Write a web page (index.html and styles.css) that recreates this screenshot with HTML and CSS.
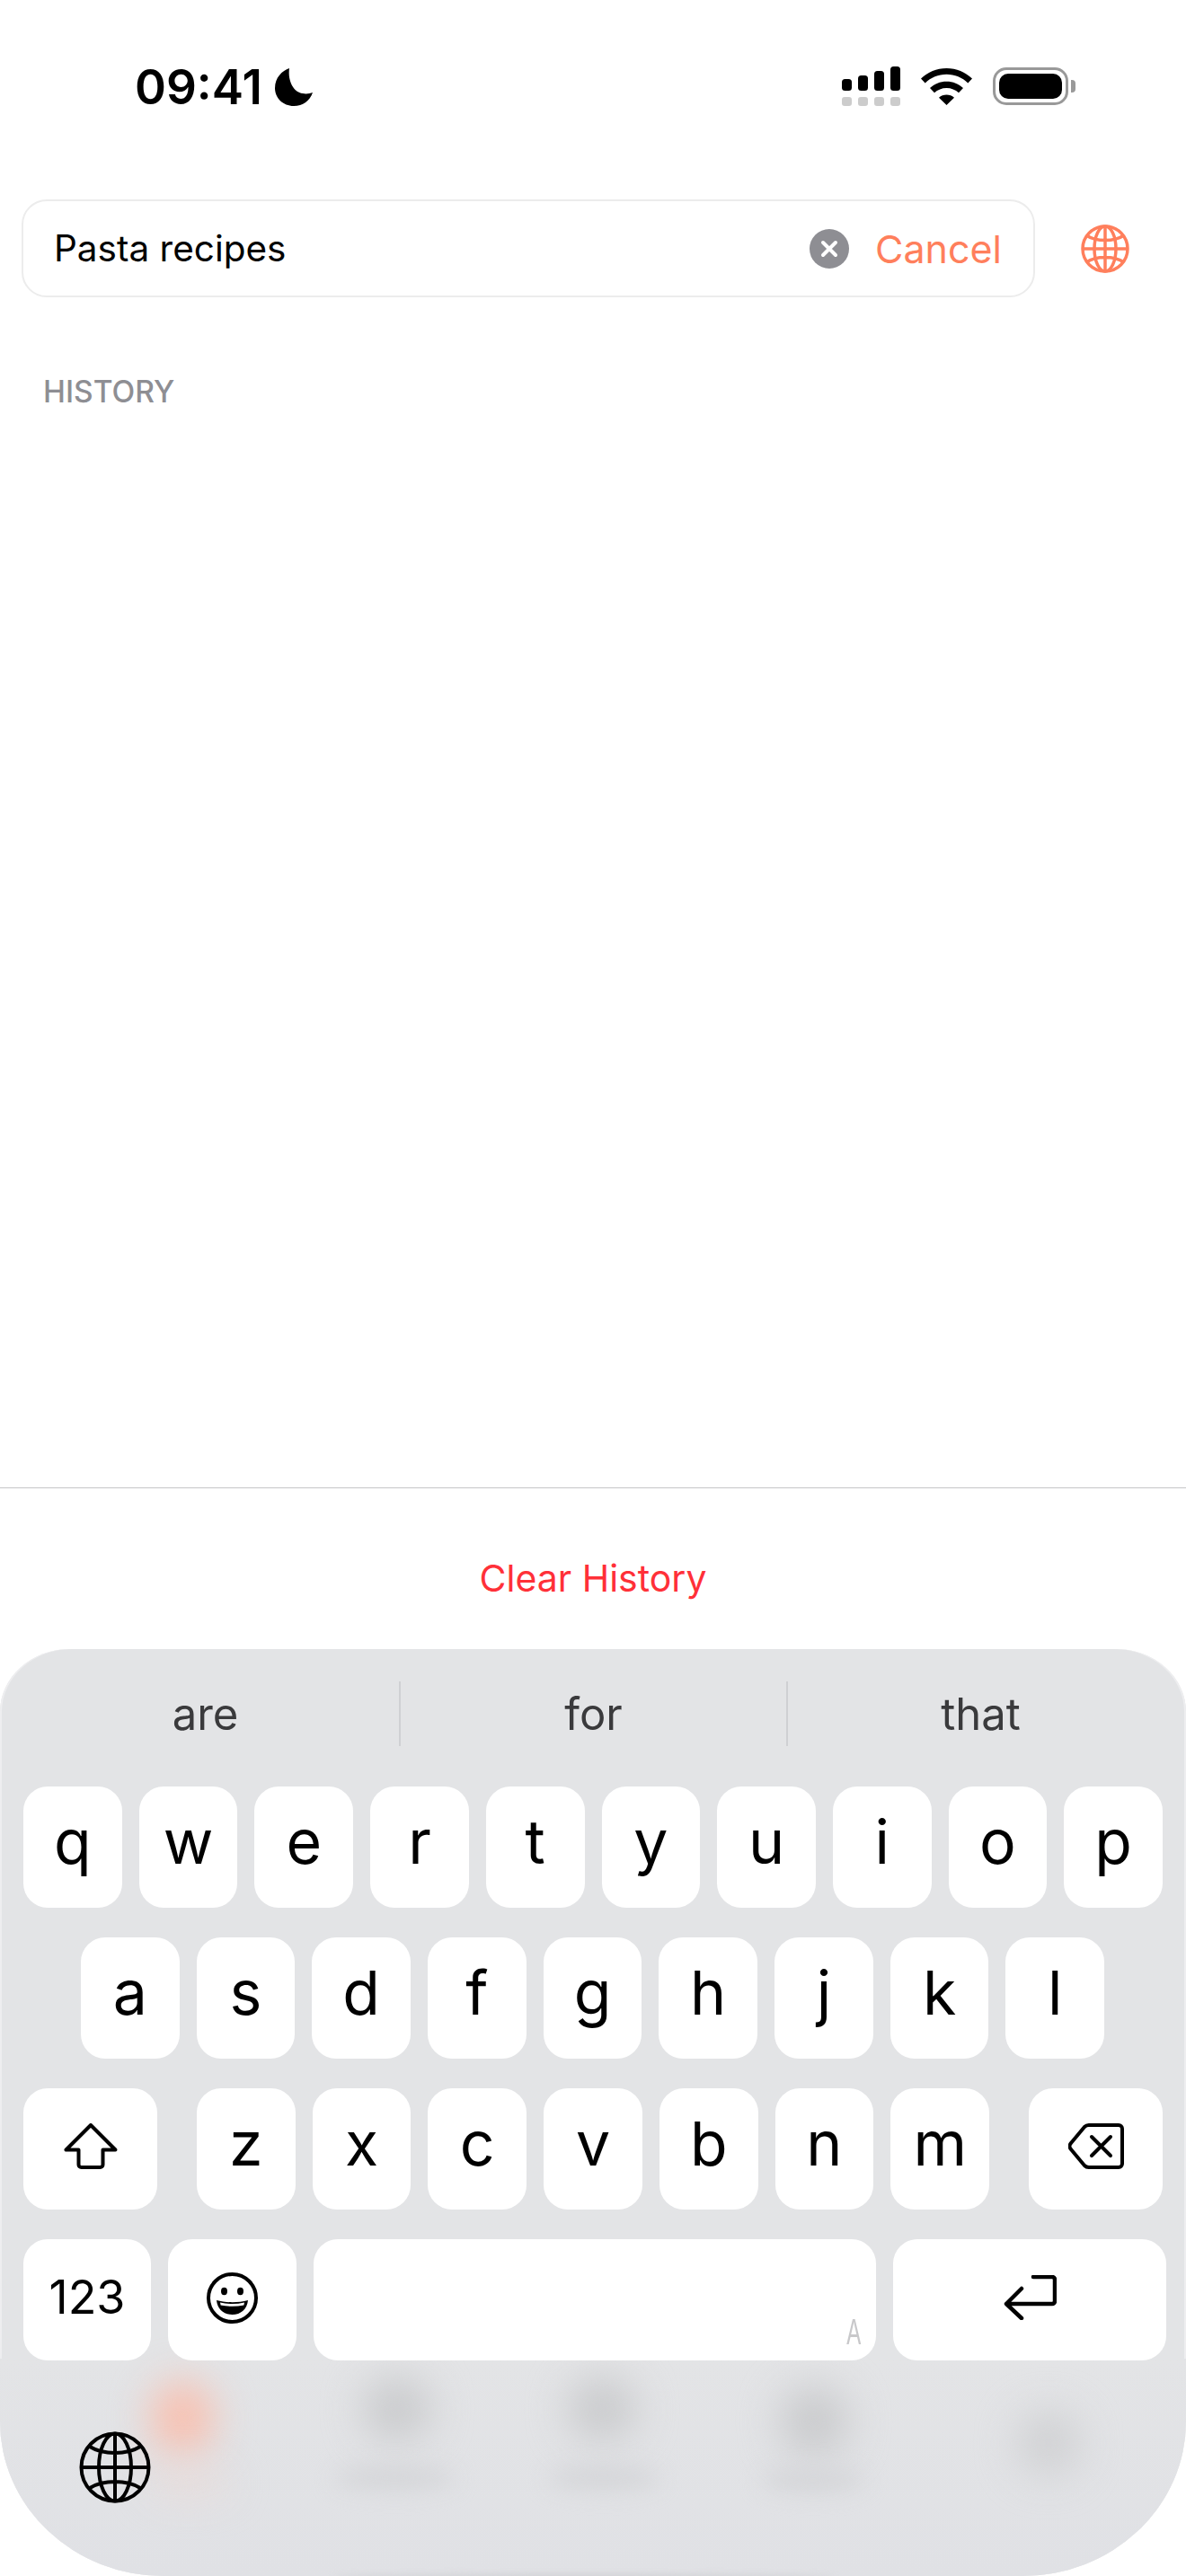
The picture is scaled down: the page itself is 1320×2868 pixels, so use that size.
FILE: index.html
```html
<!DOCTYPE html>
<html lang="en">
<head>
  <meta charset="UTF-8">
  <meta name="viewport" content="width=device-width, initial-scale=1.0">
  <title>Search</title>
  <link rel="stylesheet" href="styles.css">
</head>
<body>
  <div class="status-bar">
    <div class="status-time">
      <span>09:41</span>
      <svg class="moon-icon" viewBox="0 0 42 42"><path d="M16 0C8 3 0 10 0 22c0 11 9 20 21 20 10 0 18-6 21-15-3 1-7 2-11 1C21 27 14 14 16 0z" fill="#000"/></svg>
    </div>
    <div class="status-icons">
      <svg class="signal-icon" viewBox="0 0 65 44">
        <rect x="0" y="14" width="11" height="13" rx="3.5" fill="#000"/>
        <rect x="18" y="10" width="11" height="17" rx="3.5" fill="#000"/>
        <rect x="36" y="5" width="11" height="22" rx="3.5" fill="#000"/>
        <rect x="54" y="0" width="11" height="27" rx="3.5" fill="#000"/>
        <rect x="0" y="34" width="11" height="10" rx="3" fill="#ccc"/>
        <rect x="18" y="34" width="11" height="10" rx="3" fill="#ccc"/>
        <rect x="36" y="34" width="11" height="10" rx="3" fill="#ccc"/>
        <rect x="54" y="34" width="11" height="10" rx="3" fill="#ccc"/>
      </svg>
      <svg class="wifi-icon" viewBox="0 0 57 41"><path d="M28.500 0C17.500 0 7.500 4.300 0 11.500l4.700 5C11 10.300 19.300 6.800 28.500 6.800s17.500 3.500 23.800 9.700l4.700-5C49.500 4.300 39.500 0 28.500 0zM10 22l5 5.300c3.600-3.400 8.300-5.400 13.500-5.400s9.900 2 13.500 5.400L47 22c-4.900-4.600-11.300-7.300-18.500-7.300S14.900 17.400 10 22zm10 10.700L28.500 41l8.500-8.300c-2.300-2-5.200-3.200-8.500-3.200s-6.200 1.200-8.500 3.200z" fill="#000"/></svg>
      <div class="battery">
        <div class="battery-shell"><div class="battery-level"></div></div>
        <div class="battery-cap"></div>
      </div>
    </div>
  </div>

  <div class="search-row">
    <div class="search-box">
      <span class="search-text">Pasta recipes</span>
      <svg class="clear-icon" viewBox="0 0 44 44">
        <circle cx="22" cy="22" r="22" fill="#8e8e93"/>
        <path d="M15 15l14 14M29 15L15 29" stroke="#fff" stroke-width="4" stroke-linecap="round"/>
      </svg>
      <span class="cancel">Cancel</span>
    </div>
    <svg class="globe-icon globe-orange" viewBox="0 0 54 54">
      <circle cx="27" cy="27" r="25"/>
      <ellipse cx="27" cy="27" rx="12" ry="25"/>
      <path d="M27 2v50M2 27h50M6 12c6 4 13 5.500 21 5.500S42 16 48 12M6 42c6-4 13-5.500 21-5.500S42 38 48 42"/>
    </svg>
  </div>

  <div class="history">
    <div class="history-title">HISTORY</div>
  </div>

  <div class="history-footer">
    <span class="clear-history">Clear History</span>
  </div>

  <div class="keyboard">
    <div class="tab-blur">
      <div class="blob blob-orange blob-icon-1"></div>
      <div class="blob blob-orange-faint blob-label-1"></div>
      <div class="blob blob-icon-2"></div>
      <div class="blob blob-label blob-label-2"></div>
      <div class="blob blob-icon-3"></div>
      <div class="blob blob-label blob-label-3"></div>
      <div class="blob blob-icon-4"></div>
      <div class="blob blob-label blob-label-4"></div>
      <div class="blob blob-icon-5"></div>
      <div class="blob blob-home"></div>
    </div>

    <div class="suggestions">
      <div class="suggestion">are</div>
      <div class="suggestion">for</div>
      <div class="suggestion">that</div>
    </div>

    <div class="key-rows">
      <div class="key-row">
        <div class="key">q</div><div class="key">w</div><div class="key">e</div><div class="key">r</div><div class="key">t</div>
        <div class="key">y</div><div class="key">u</div><div class="key">i</div><div class="key">o</div><div class="key">p</div>
      </div>
      <div class="key-row row-middle">
        <div class="key">a</div><div class="key">s</div><div class="key">d</div><div class="key">f</div><div class="key">g</div>
        <div class="key">h</div><div class="key">j</div><div class="key">k</div><div class="key">l</div>
      </div>
      <div class="key-row row-shift">
        <div class="key key-shift">
          <svg class="shift-icon" viewBox="0 0 60 51"><path d="M30 2L2.500 29.500H16.500V46a3 3 0 0 0 3 3h21a3 3 0 0 0 3-3V29.500H57.500z" fill="none" stroke="#000" stroke-width="4" stroke-linejoin="round"/></svg>
        </div>
        <div class="key">z</div><div class="key">x</div><div class="key">c</div><div class="key">v</div>
        <div class="key">b</div><div class="key">n</div><div class="key">m</div>
        <div class="key key-delete">
          <svg class="delete-icon" viewBox="0 0 62 51"><path d="M23 2h33a4 4 0 0 1 4 4v39a4 4 0 0 1-4 4H23a7 7 0 0 1-5-2L3 29a5 5 0 0 1 0-7L18 4a7 7 0 0 1 5-2z" fill="none" stroke="#000" stroke-width="4" stroke-linejoin="round"/><path d="M26 15l21 21M47 15L26 36" stroke="#000" stroke-width="4" stroke-linecap="round"/></svg>
        </div>
      </div>
      <div class="key-row row-bottom">
        <div class="key key-123">123</div>
        <div class="key key-emoji">
          <svg class="emoji-icon" viewBox="0 0 57 57">
            <circle cx="28.500" cy="28.500" r="26.500" fill="none" stroke="#000" stroke-width="4"/>
            <ellipse cx="19.500" cy="21" rx="3.500" ry="4.200" fill="#000"/>
            <ellipse cx="37.500" cy="21" rx="3.500" ry="4.200" fill="#000"/>
            <path d="M11 31c11 3 24 3 35 0-1 10-8 16-17.500 16S12 41 11 31z" fill="#000"/>
            <path d="M15 33.500c9 2 18 2 27 0l-.6 3c-8.500 1.800-17.300 1.800-25.800 0z" fill="#fff"/>
          </svg>
        </div>
        <div class="key key-space"><span class="space-mark">A</span></div>
        <div class="key key-return">
          <svg class="return-icon" viewBox="0 0 59 50"><path d="M33 2h21a3 3 0 0 1 3 3v24a3 3 0 0 1-3 3H3M20 15L3 32l17 16" fill="none" stroke="#000" stroke-width="4.500" stroke-linecap="round" stroke-linejoin="round"/></svg>
        </div>
      </div>
    </div>

    <svg class="globe-icon globe-black" viewBox="0 0 80 80">
      <circle cx="40" cy="40" r="37.500"/>
      <ellipse cx="40" cy="40" rx="18" ry="37.500"/>
      <path d="M40 2.500v75M2.500 40h75M12 17c8 5 17 7 28 7s20-2 28-7M12 63c8-5 17-7 28-7s20 2 28 7"/>
    </svg>
  </div>
</body>
</html>
```

FILE: styles.css
```css
:root {
  --accent: #ff7f5c;
  --key-bg: #fff;
  --keyboard-bg: #e3e4e6;
  --ui-font: Inter, 'Noto Sans', sans-serif;
}
* {
  box-sizing: border-box;
}
body {
  margin: 0;
  width: 1320px;
  height: 2868px;
  background-color: #fff;
  font-family: var(--ui-font);
  display: flex;
  flex-direction: column;
  overflow: hidden;
}

/* status bar */
.status-bar {
  height: 222px;
  padding: 72px 123px 0 150px;
  display: flex;
  justify-content: space-between;
  align-items: flex-start;
  flex-shrink: 0;
}
.status-time {
  display: flex;
  align-items: center;
  height: 50px;
  gap: 14px;
  font-size: 53px;
  font-weight: 600;
  color: #000;
}
.moon-icon {
  width: 42px;
  height: 42px;
}
.status-icons {
  display: flex;
  align-items: flex-start;
  gap: 23px;
  padding-top: 2px;
}
.signal-icon {
  width: 65px;
  height: 44px;
}
.wifi-icon {
  width: 57px;
  height: 41px;
  margin-top: 2px;
}
.battery {
  display: flex;
  align-items: center;
  gap: 3px;
  margin-top: 1px;
}
.battery-shell {
  width: 84px;
  height: 42px;
  border: 3px solid #999;
  border-radius: 15px;
  padding: 4px;
}
.battery-level {
  width: 100%;
  height: 100%;
  background-color: #000;
  border-radius: 10px;
}
.battery-cap {
  width: 5px;
  height: 14px;
  background-color: #999;
  border-radius: 0 4px 4px 0;
}

/* search */
.search-row {
  display: flex;
  align-items: center;
  padding-left: 24px;
  flex-shrink: 0;
}
.search-box {
  width: 1128px;
  height: 109px;
  display: flex;
  align-items: center;
  padding: 0 35px 0 34px;
  border: 2px solid #ececec;
  border-radius: 28px;
}
.search-text {
  flex: 1;
  font-size: 40.5px;
  color: #000;
}
.clear-icon {
  width: 44px;
  height: 44px;
  margin-right: 29px;
}
.cancel {
  font-size: 43px;
  color: var(--accent);
}
.globe-icon {
  fill: none;
}
.globe-orange {
  width: 54px;
  height: 54px;
  margin-left: 51px;
  stroke: var(--accent);
  stroke-width: 3.5;
}

/* history */
.history {
  flex: 1;
  padding: 85px 48px 0;
}
.history-title {
  font-size: 33.5px;
  font-weight: 500;
  line-height: 40px;
  color: #8e8e93;
}
.history-footer {
  height: 180px;
  flex-shrink: 0;
  display: flex;
  justify-content: center;
  align-items: center;
  padding-top: 20px;
  border-top: 1px solid #c6c6c8;
}
.clear-history {
  font-size: 41px;
  color: #ff3038;
}

/* keyboard */
.keyboard {
  position: relative;
  height: 1032px;
  flex-shrink: 0;
  overflow: hidden;
  background-color: var(--keyboard-bg);
  border-radius: 78px 78px 182px 182px / 70px 70px 172px 172px;
  box-shadow: inset 2px 0 0 #eeeef0, inset -2px 0 0 #eeeef0;
}
.tab-blur {
  position: absolute;
  top: 790px;
  left: 0;
  width: 100%;
  height: 242px;
  background: linear-gradient(#e3e4e6, #e0e1e5);
}
.blob {
  position: absolute;
  background-color: #cacbcd;
  border-radius: 50%;
  filter: blur(22px);
}
.blob-orange {
  background-color: #f8c0b0;
}
.blob-orange-faint {
  background-color: #ebdbd8;
}
.blob-label {
  background-color: #d4d5d8;
  filter: blur(12px);
}
.blob-icon-1 { left: 168px; top: 24px; width: 70px; height: 84px; }
.blob-label-1 { left: 165px; top: 125px; width: 90px; height: 26px; }
.blob-icon-2 { left: 404px; top: 20px; width: 76px; height: 72px; }
.blob-label-2 { left: 372px; top: 120px; width: 134px; height: 26px; }
.blob-icon-3 { left: 632px; top: 20px; width: 76px; height: 72px; }
.blob-label-3 { left: 610px; top: 120px; width: 124px; height: 26px; }
.blob-icon-4 { left: 868px; top: 30px; width: 76px; height: 80px; }
.blob-label-4 { left: 848px; top: 122px; width: 114px; height: 26px; }
.blob-icon-5 { left: 1132px; top: 58px; width: 70px; height: 72px; background-color: #d0d1d3; }
.blob-home { left: 370px; top: 240px; width: 560px; height: 5px; filter: blur(3px); background-color: #cfd0d3; }

.suggestions {
  position: relative;
  display: grid;
  grid-template-columns: repeat(3, 1fr);
  padding: 36px 14px 0 13px;
  height: 153px;
}
.suggestion {
  height: 72px;
  display: flex;
  justify-content: center;
  align-items: center;
  font-size: 49px;
  color: #3a3a3c;
}
.suggestion + .suggestion {
  border-left: 2px solid #cfd0d3;
}
.key-rows {
  position: relative;
  display: flex;
  flex-direction: column;
  gap: 33px;
}
.key-row {
  display: flex;
  gap: 19px;
  height: 135px;
  padding: 0 26px;
}
.key {
  flex: 1;
  display: flex;
  justify-content: center;
  align-items: center;
  padding-bottom: 13px;
  background-color: var(--key-bg);
  border-radius: 27px;
  font-size: 68px;
  color: #000;
}
.row-middle {
  padding: 0 91px 0 90px;
}
.key-shift,
.key-delete {
  flex: none;
  width: 149px;
  padding-bottom: 6px;
}
.key-shift {
  margin-right: 25px;
}
.key-delete {
  margin-left: 25px;
}
.key-123 {
  flex: none;
  width: 142px;
  padding-bottom: 6px;
  font-size: 52px;
}
.key-emoji {
  flex: none;
  width: 143px;
  padding-bottom: 4px;
}
.key-space {
  flex: none;
  width: 626px;
  justify-content: flex-end;
  align-items: flex-end;
  padding: 0 11px 16px 0;
}
.key-return {
  flex: none;
  width: 304px;
  padding-bottom: 6px;
}
.space-mark {
  display: block;
  font-family: 'Liberation Sans', sans-serif;
  font-size: 40px;
  line-height: 32px;
  color: #c8c8ca;
  transform: scaleX(0.6);
}
.shift-icon { width: 60px; height: 51px; }
.delete-icon { width: 62px; height: 51px; }
.emoji-icon { width: 57px; height: 57px; }
.return-icon { width: 59px; height: 50px; }

.globe-black {
  position: relative;
  display: block;
  width: 80px;
  height: 80px;
  margin: 79px 0 0 88px;
  stroke: #000;
  stroke-width: 4;
}
```
